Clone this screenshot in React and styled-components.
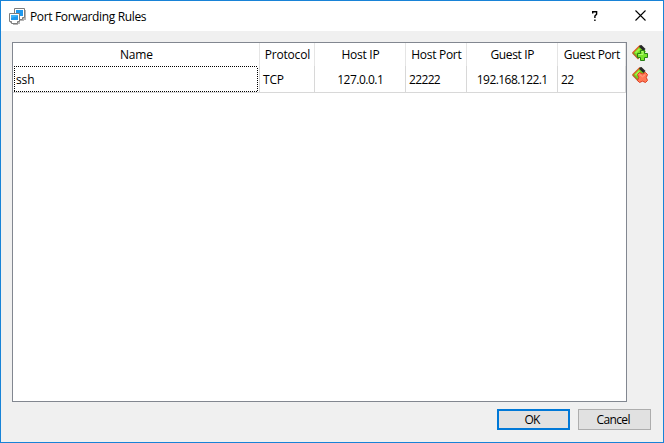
import React from "react";
import styled, { createGlobalStyle } from "styled-components";

const GlobalStyle = createGlobalStyle`
  * { box-sizing: border-box; }
  html, body { margin: 0; padding: 0; }
  body { font: 12px/16px "Open Sans", "Noto Sans", sans-serif; color: #000; overflow: hidden; }
`;

const Window = styled.main`
  width: 664px;
  height: 443px;
  display: flex;
  flex-direction: column;
  border: 1px solid #1883d7;
  background: #f0f0f0;
`;

const TitleBar = styled.header`
  height: 30px;
  display: flex;
  align-items: center;
  background: #fff;
  padding-left: 8px;
`;

const Title = styled.h1`
  flex: 1;
  margin: 0;
  padding: 1px 0 0 4px;
  font-size: 12px;
  font-weight: 400;
  letter-spacing: ${(p) => p.$spacing}px;
`;

const CaptionButton = styled.button`
  width: 45px;
  height: 29px;
  display: grid;
  place-items: center;
  padding: 0 1px 1px 0;
  border: 0;
  background: transparent;
`;

const Body = styled.section`
  height: 371px;
  display: flex;
  padding: 11px 11px 0;
`;

const TableFrame = styled.div`
  width: 615px;
  height: 360px;
  border: 1px solid #828790;
  background: #fff;
`;

const Row = styled.div`
  display: grid;
  grid-template-columns: 247px 55px 91px 61px 91px 68px;
  height: ${(p) => p.$height}px;
`;

const HeaderCell = styled.div`
  display: flex;
  align-items: center;
  justify-content: center;
  padding-left: 1px;
  border-right: 1px solid #e5e5e5;
  white-space: nowrap;
`;

const Cell = styled.div`
  display: flex;
  align-items: center;
  justify-content: ${(p) => (p.$center ? "center" : "flex-start")};
  padding: 2px 0 0 ${(p) => (p.$center ? 1 : 3)}px;
  border-right: 1px solid #d8d8d8;
  border-bottom: 1px solid #d8d8d8;
  white-space: nowrap;
`;

const NameCell = styled(Cell)`
  padding: 0 1px;
`;

const FocusBox = styled.div`
  width: 245px;
  height: 26px;
  display: flex;
  align-items: center;
  padding: 2px 0 0 2px;
  background:
    repeating-linear-gradient(90deg, #000 0 1px, #fff 1px 2px) 0 0 / 100% 1px no-repeat,
    repeating-linear-gradient(90deg, #000 0 1px, #fff 1px 2px) 0 100% / 100% 1px no-repeat,
    repeating-linear-gradient(180deg, #000 0 1px, #fff 1px 2px) 0 0 / 1px 100% no-repeat,
    repeating-linear-gradient(180deg, #000 0 1px, #fff 1px 2px) 100% 0 / 1px 100% no-repeat;
`;

const Label = styled.span`
  letter-spacing: ${(p) => p.$spacing}px;
  margin-right: ${(p) => -p.$spacing}px;
`;

const Tools = styled.div`
  display: flex;
  flex-direction: column;
  gap: 5px;
  padding: 3px 0 0 5px;
`;

const ToolButton = styled.button`
  width: 17px;
  height: 17px;
  padding: 0;
  border: 0;
  background: transparent;
  svg { display: block; }
`;

const Footer = styled.footer`
  display: flex;
  justify-content: flex-end;
  gap: 8px;
  padding: 7px 12px 0 0;
`;

const DialogButton = styled.button`
  width: 73px;
  height: 21px;
  display: flex;
  align-items: center;
  justify-content: center;
  padding: 1px 2px 0 0;
  border: ${(p) => (p.$primary ? "2px solid #0078d7" : "1px solid #adadad")};
  background: #e1e1e1;
  color: #000;
  font: 12px/16px "Open Sans", "Noto Sans", sans-serif;
`;

const AppIcon = () => (
  <svg width="17" height="17" viewBox="0 0 17 17">
    <path d="M6 2h11v10h-2v1h-4v3h-2v1H4v-2H1V7h5z" fill="#b5b5b5" />
    <path d="M5.5.5h10v9h-2v2h-5v-2h-3z" fill="#fff" stroke="#7d7d7d" />
    <path d="M7 2h7v6H7z" fill="#1e98ee" />
    <path d="M.5 5.5h10v8h-2v2h-6v-2h-2z" fill="#fff" stroke="#7d7d7d" />
    <path d="M2 7h7v5H2z" fill="#1e98ee" />
    <path d="M2 7h7v1L2 10z" fill="#3fb2f5" />
  </svg>
);

const RuleIcon = ({ children }) => (
  <svg width="17" height="17" viewBox="0 0 17 17">
    <path d="M8 .5 14 6.5 6.5 14 .5 8z" fill="#72d51d" />
    <path d="M.5 8 8 .5" stroke="#df5b25" strokeWidth="1.3" />
    <path d="M.7 8 6.5 14" stroke="#b5622a" strokeWidth="1.4" />
    <path d="M8 .7 12.5 5" stroke="#282828" strokeWidth="3" />
    <path d="m3.5 8 4-4" stroke="#9ff342" strokeWidth="2" />
    {children}
  </svg>
);

const AddIcon = () => (
  <RuleIcon>
    <path d="M8.5 5.5h4v3h3v4h-3v3h-4v-3h-3v-4h3z" fill="#77e52c" stroke="#288016" />
    <path d="M9.5 6.5h1.5v3H6.5" stroke="#b3fa72" fill="none" />
  </RuleIcon>
);

const RemoveIcon = () => (
  <RuleIcon>
    <path d="m7.5 5.5 3 1.3 3-1.3 2 2-1.2 3 1.2 3-2 2-3-1.3-3 1.3-2-2 1.3-3-1.3-3z" fill="#ff7955" stroke="#dc3d22" />
    <path d="m7.7 7.5 2.8 2.3 2.7-2.2" stroke="#ffa789" fill="none" />
  </RuleIcon>
);

const columns = [
  { title: "Name", spacing: -0.15 },
  { title: "Protocol", spacing: -0.2 },
  { title: "Host IP", spacing: -0.25 },
  { title: "Host Port", spacing: -0.3 },
  { title: "Guest IP", spacing: -0.35 },
  { title: "Guest Port", spacing: -0.35 },
];

export default function App() {
  return (
    <>
      <GlobalStyle />
      <Window>
        <TitleBar>
          <AppIcon />
          <Title $spacing={-0.35}>Port Forwarding Rules</Title>
          <CaptionButton aria-label="Help">
            <svg width="6" height="10" viewBox="0 0 6 10" fill="none" stroke="#000" strokeWidth="1.4">
              <path d="M.7 2.5V.7h3.9v2.6L2.9 5v2M2.9 8.4V10" />
            </svg>
          </CaptionButton>
          <CaptionButton aria-label="Close">
            <svg width="11" height="11" viewBox="0 0 11 11" stroke="#000" strokeWidth="1.1">
              <path d="m.5.5 10 10M10.5.5l-10 10" />
            </svg>
          </CaptionButton>
        </TitleBar>
        <Body>
          <TableFrame>
            <Row $height={23}>
              {columns.map((c) => (
                <HeaderCell key={c.title}><Label $spacing={c.spacing}>{c.title}</Label></HeaderCell>
              ))}
            </Row>
            <Row $height={27}>
              <NameCell><FocusBox><Label $spacing={-0.1}>ssh</Label></FocusBox></NameCell>
              <Cell><Label $spacing={-0.2}>TCP</Label></Cell>
              <Cell $center><Label $spacing={-0.5}>127.0.0.1</Label></Cell>
              <Cell><Label $spacing={-0.65}>22222</Label></Cell>
              <Cell $center><Label $spacing={-0.55}>192.168.122.1</Label></Cell>
              <Cell><Label $spacing={-0.65}>22</Label></Cell>
            </Row>
          </TableFrame>
          <Tools>
            <ToolButton aria-label="Add rule"><AddIcon /></ToolButton>
            <ToolButton aria-label="Remove rule"><RemoveIcon /></ToolButton>
          </Tools>
        </Body>
        <Footer>
          <DialogButton $primary><Label $spacing={-0.8}>OK</Label></DialogButton>
          <DialogButton><Label $spacing={-0.6}>Cancel</Label></DialogButton>
        </Footer>
      </Window>
    </>
  );
}
